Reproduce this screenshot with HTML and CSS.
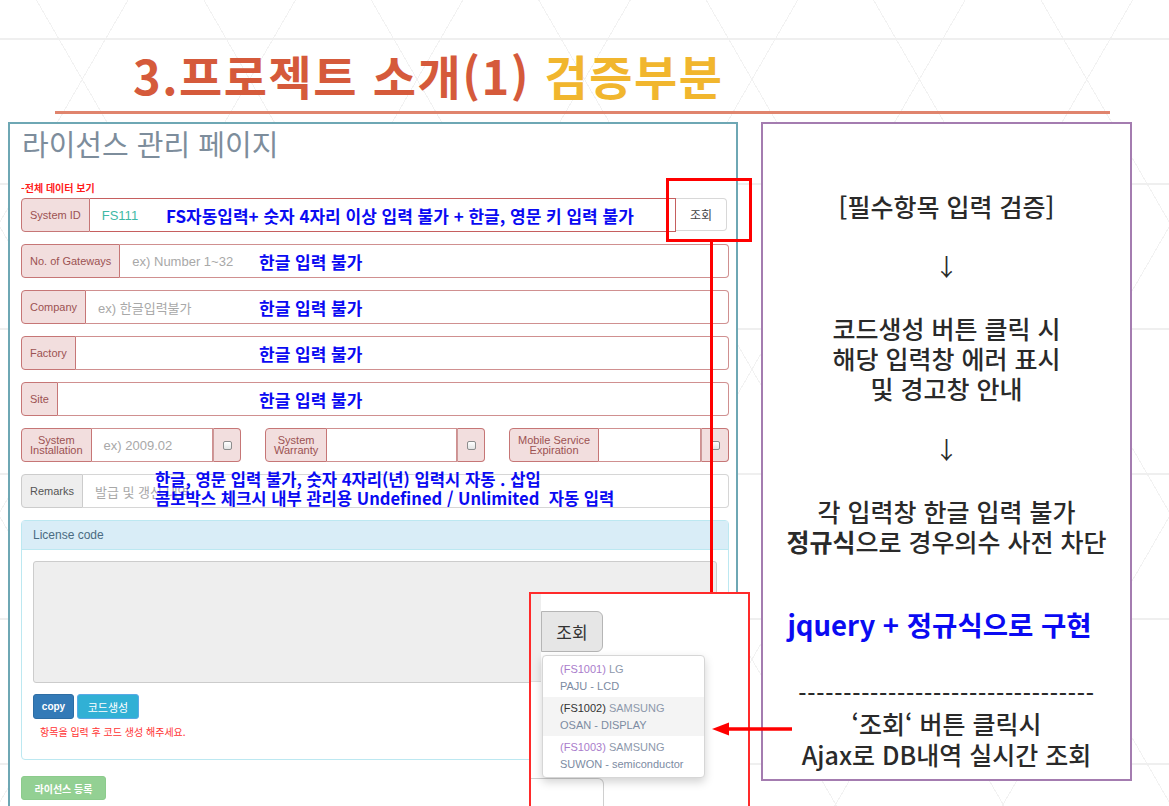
FILE: index.html
```html
<!DOCTYPE html>
<html lang="ko">
<head>
<meta charset="utf-8">
<title>3.프로젝트 소개(1) 검증부분</title>
<link rel="stylesheet" href="styles.css">
</head>
<body>
<div class="slide">
  <h1 class="title"><span class="t-main">3.프로젝트 소개(1)</span> <span class="t-accent">검증부분</span></h1>
  <div class="rule"></div>

  <div class="content">
    <section class="app">
      <h2 class="app-title">라이선스 관리 페이지</h2>
      <div class="all-link">-전체 데이터 보기</div>

      <div class="form">
        <div class="row row-id">
          <div class="group err">
            <span class="addon">System ID</span>
            <span class="field"><span class="val">FS111</span></span>
          </div>
          <button class="btn-lookup" type="button">조회</button>
          <span class="note n1">FS자동입력+ 숫자 4자리 이상 입력 불가 + 한글, 영문 키 입력 불가</span>
        </div>

        <div class="row">
          <div class="group err">
            <span class="addon">No. of Gateways</span>
            <span class="field">ex) Number 1~32</span>
          </div>
          <span class="note n2">한글 입력 불가</span>
        </div>

        <div class="row">
          <div class="group err">
            <span class="addon">Company</span>
            <span class="field">ex) 한글입력불가</span>
          </div>
          <span class="note n2">한글 입력 불가</span>
        </div>

        <div class="row">
          <div class="group err">
            <span class="addon">Factory</span>
            <span class="field"></span>
          </div>
          <span class="note n2">한글 입력 불가</span>
        </div>

        <div class="row">
          <div class="group err">
            <span class="addon">Site</span>
            <span class="field"></span>
          </div>
          <span class="note n2">한글 입력 불가</span>
        </div>

        <div class="row row-3">
          <div class="group err">
            <span class="addon two">System<br>Installation</span>
            <span class="field mid">ex) 2009.02</span>
            <span class="addon-cb"><span class="cb"></span></span>
          </div>
          <div class="group err">
            <span class="addon two">System<br>Warranty</span>
            <span class="field mid"></span>
            <span class="addon-cb"><span class="cb"></span></span>
          </div>
          <div class="group err">
            <span class="addon two">Mobile Service<br>Expiration</span>
            <span class="field mid"></span>
            <span class="addon-cb"><span class="cb"></span></span>
          </div>
        </div>

        <div class="row">
          <div class="group plain">
            <span class="addon">Remarks</span>
            <span class="field">발급 및 갱신 내역</span>
          </div>
          <span class="note n3">한글, 영문 입력 불가, 숫자 4자리(년) 입력시 자동 . 삽입<br>콤보박스 체크시 내부 관리용 Undefined / Unlimited&nbsp; 자동 입력</span>
        </div>
      </div>

      <div class="lic">
        <div class="lic-head">License code</div>
        <div class="lic-body">
          <div class="code-area"></div>
          <div class="btns">
            <button class="btn btn-copy" type="button">copy</button>
            <button class="btn btn-gen" type="button">코드생성</button>
          </div>
          <p class="msg">항목을 입력 후 코드 생성 해주세요.</p>
        </div>
      </div>

      <button class="btn-reg" type="button">라이선스 등록</button>
    </section>

    <aside class="notes">
      <div class="nb">[필수항목 입력 검증]</div>
      <div class="arrow a1">↓</div>
      <div class="nb b2">코드생성 버튼 클릭 시<br>해당 입력창 에러 표시<br>및 경고창 안내</div>
      <div class="arrow a2">↓</div>
      <div class="nb b3">각 입력창 한글 입력 불가<br><strong>정규식</strong>으로 경우의수 사전 차단</div>
      <div class="jq">jquery + 정규식으로 구현</div>
      <div class="dash">---------------------------------</div>
      <div class="nb b4">‘조회‘ 버튼 클릭시<br>Ajax로 DB내역 실시간 조회</div>
    </aside>
  </div>

  <!-- overlays -->
  <div class="hl-box"></div>
  <div class="hl-line"></div>

  <div class="zoom-pop">
    <div class="zp-top">
      <div class="zp-strip"></div>
      <div class="zp-btn">조회</div>
    </div>
    <div class="zp-bottom"></div>
    <ul class="dropdown">
      <li class="dd-item"><span class="id">(FS1001)</span> <span class="nm">LG</span><br><span class="loc">PAJU - LCD</span></li>
      <li class="dd-item active"><span class="id">(FS1002)</span> <span class="nm">SAMSUNG</span><br><span class="loc">OSAN - DISPLAY</span></li>
      <li class="dd-item"><span class="id">(FS1003)</span> <span class="nm">SAMSUNG</span><br><span class="loc">SUWON - semiconductor</span></li>
    </ul>
  </div>

  <svg class="red-arrow" width="80" height="16" viewBox="0 0 80 16" aria-hidden="true">
    <line x1="14" y1="8" x2="80" y2="8" stroke="#f00" stroke-width="3.5"/>
    <polygon points="0,8 17,1.5 17,14.5" fill="#f00"/>
  </svg>
</div>
</body>
</html>
```

FILE: styles.css
```css
* { box-sizing: border-box; }
html, body { margin: 0; padding: 0; }
body {
  width: 1169px;
  height: 806px;
  overflow: hidden;
  background: #fff;
  font-family: "Noto Sans CJK KR", sans-serif;
}

.slide {
  position: relative;
  width: 1169px;
  height: 806px;
  overflow: hidden;
  background-color: #fff;
  background-image:
    repeating-linear-gradient(180deg, transparent 0 38px, #efefef 38px 40px, transparent 40px 145px),
    repeating-linear-gradient(60deg, transparent 0 144px, #f2f2f2 144px 145px),
    repeating-linear-gradient(-60deg, transparent 0 144px, #f2f2f2 144px 145px);
}

/* ---------- title ---------- */
.title {
  margin: 0;
  padding: 52px 0 0 133px;
  font-size: 47px;
  line-height: 46px;
  font-weight: 700;
  letter-spacing: 1.5px;
  white-space: nowrap;
}
.t-main { color: #d55a3b; }
.t-accent { color: #f1b62e; }

.rule {
  margin: 13px 0 0 55px;
  width: 1055px;
  height: 3px;
  background: #e0846d;
}

.content {
  display: flex;
  align-items: flex-start;
  gap: 23px;
  margin-top: 8px;
  padding-left: 8px;
}

/* ---------- left app panel ---------- */
.app {
  width: 730px;
  height: 700px;
  flex: none;
  background: #fff;
  border: 2px solid #6ea7b4;
  border-bottom: 0;
  padding: 0 7px 0 11px;
  font-family: "Liberation Sans", "Noto Sans CJK KR", sans-serif;
}

.app-title {
  margin: 1px 0 0 1px;
  font-family: "Noto Sans CJK KR", sans-serif;
  font-size: 29px;
  line-height: 37px;
  font-weight: 400;
  color: #7d8d9c;
}

.all-link {
  margin-top: 19px;
  font-family: "Noto Sans CJK KR", sans-serif;
  font-size: 10px;
  line-height: 14px;
  font-weight: 700;
  color: #ff1a1a;
}

.form {
  margin-top: 3px;
  display: flex;
  flex-direction: column;
  gap: 12px;
}

.row {
  position: relative;
  display: flex;
  height: 34px;
}

.group {
  display: flex;
  flex: 1;
  min-width: 0;
}

.addon {
  display: flex;
  align-items: center;
  justify-content: center;
  padding: 0 8px;
  font-size: 11px;
  line-height: 11px;
  text-align: center;
  border: 1px solid;
  border-radius: 4px 0 0 4px;
  white-space: nowrap;
}
.addon.two { line-height: 10px; }

.field {
  flex: 1;
  min-width: 0;
  display: flex;
  align-items: center;
  padding-left: 12px;
  font-size: 13px;
  color: #a8a8a8;
  background: #fff;
  border: 1px solid;
  border-left: 0;
  border-radius: 0 4px 4px 0;
  white-space: nowrap;
  overflow: hidden;
}

.err .addon { background: #f2dede; border-color: #c67676; color: #9c5252; }
.err .field { border-color: #d09090; }
.plain .addon { background: #eee; border-color: #ccc; color: #555; }
.plain .field { border-color: #d6d6d6; }

.val { color: #3fb9a6; }

.row-id .field { border-radius: 0; border-color: #c65f5f; }
.btn-lookup {
  width: 51px;
  height: 33px;
  margin: 0 2px 0 0;
  padding: 0;
  background: #fff;
  border: 1px solid #d8d8d8;
  border-left: 0;
  border-radius: 0 4px 4px 0;
  font-family: "Noto Sans CJK KR", sans-serif;
  font-size: 12px;
  color: #444;
}

.row-3 {
  display: grid;
  grid-template-columns: repeat(3, 220px);
  column-gap: 24px;
}
.field.mid { border-radius: 0; }
.addon-cb {
  width: 28px;
  display: flex;
  align-items: center;
  justify-content: center;
  background: #f2dede;
  border: 1px solid #c67676;
  border-left-color: #c99;
  border-radius: 0 4px 4px 0;
}
.cb {
  width: 9px;
  height: 9px;
  border: 1px solid #8d8d8d;
  border-radius: 2px;
  background: linear-gradient(#fff, #e4e4e4);
}

/* annotations laid over the form */
.note {
  position: absolute;
  top: 0;
  bottom: 0;
  display: flex;
  align-items: center;
  font-family: "Noto Sans CJK KR", sans-serif;
  font-size: 17px;
  line-height: 19px;
  font-weight: 700;
  color: #0a0af2;
  white-space: nowrap;
}
.n1 { left: 145px; }
.n2 { left: 238px; }
.n3 { left: 134px; top: -4px; font-size: 16.6px; }

/* license panel */
.lic {
  margin-top: 12px;
  height: 240px;
  border: 1px solid #bce8f1;
  border-radius: 4px;
  background: #fff;
}
.lic-head {
  height: 29px;
  display: flex;
  align-items: center;
  padding-left: 11px;
  background: #d9edf7;
  border-bottom: 1px solid #bce8f1;
  font-size: 12px;
  color: #4a6b82;
}
.lic-body { padding: 11px; }
.code-area {
  height: 122px;
  background: #eee;
  border: 1px solid #ccc;
  border-radius: 3px;
}
.btns {
  display: flex;
  gap: 3px;
  margin-top: 11px;
}
.btn {
  height: 25px;
  padding: 0;
  border: 1px solid;
  border-radius: 3px;
  color: #fff;
  font-family: "Liberation Sans", "Noto Sans CJK KR", sans-serif;
  font-size: 10px;
  font-weight: 700;
}
.btn-copy { width: 41px; background: #337ab7; border-color: #2e6da4; }
.btn-gen { width: 62px; background: #31b0d5; border-color: #5aa9e6; font-weight: 400; font-size: 11px; }
.msg {
  margin: 6px 0 0 7px;
  font-family: "Noto Sans CJK KR", sans-serif;
  font-size: 10px;
  line-height: 14px;
  color: #ff3333;
}

.btn-reg {
  display: block;
  margin-top: 16px;
  width: 85px;
  height: 24px;
  padding: 0;
  background: #93d093;
  border: 1px solid #8ccb8c;
  border-radius: 3px;
  color: #fff;
  font-family: "Noto Sans CJK KR", sans-serif;
  font-size: 10px;
  font-weight: 700;
}

/* ---------- right notes panel ---------- */
.notes {
  width: 371px;
  height: 659px;
  flex: none;
  background: #fff;
  border: 2px solid #a47cb0;
  padding-top: 67px;
  display: flex;
  flex-direction: column;
  align-items: center;
  text-align: center;
  color: #2a2a2a;
  font-size: 25px;
  font-weight: 500;
  line-height: 30px;
}
.nb { white-space: nowrap; }
.nb strong { font-weight: 700; }
.arrow { font-size: 24px; line-height: 30px; font-weight: 400; }
.a1 { margin-top: 30px; }
.b2 { margin-top: 32px; }
.a2 { margin-top: 31px; }
.b3 { margin-top: 32px; }
.jq {
  margin: 51px 14px 0 0;
  font-size: 27.5px;
  line-height: 34px;
  font-weight: 700;
  color: #0a0af2;
  white-space: nowrap;
}
.dash {
  margin-top: 37px;
  font-size: 23px;
  letter-spacing: 0.75px;
  white-space: nowrap;
}
.b4 { line-height: 31px; }

/* ---------- overlays ---------- */
.hl-box {
  position: absolute;
  left: 666px;
  top: 178px;
  width: 86px;
  height: 64px;
  border: 3.5px solid #ff0000;
}
.hl-line {
  position: absolute;
  left: 710px;
  top: 241px;
  width: 3px;
  height: 352px;
  background: #ff0000;
}

.zoom-pop {
  position: absolute;
  left: 529px;
  top: 592px;
  width: 221px;
  height: 230px;
  background: #fff;
  border: 2px solid #ff2a2a;
}
.zp-top {
  display: flex;
  align-items: flex-start;
  height: 88px;
}
.zp-strip {
  width: 10px;
  height: 88px;
  background: #eee;
  border-bottom: 1px solid #dcdcdc;
}
.zp-btn {
  margin-top: 17px;
  width: 62px;
  height: 41px;
  display: flex;
  align-items: center;
  justify-content: center;
  background: #e6e6e6;
  border: 1px solid #b5b5b5;
  border-radius: 0 6px 6px 0;
  font-size: 17px;
  color: #333;
}
.zp-bottom {
  margin-top: 96px;
  width: 73px;
  height: 60px;
  border: 1px solid #cfcfcf;
  border-left: 0;
  border-radius: 0 6px 0 0;
}

.dropdown {
  position: absolute;
  left: 11px;
  top: 61px;
  width: 163px;
  margin: 0;
  padding: 2px 0;
  list-style: none;
  background: #fff;
  border: 1px solid #d6d6d6;
  border-radius: 4px;
  box-shadow: 0 4px 10px rgba(0, 0, 0, 0.18);
  font-family: "Liberation Sans", sans-serif;
  font-size: 11px;
  line-height: 17px;
}
.dd-item {
  height: 39px;
  padding: 3px 0 0 17px;
  white-space: nowrap;
}
.dd-item.active { background: #f4f4f4; }
.id { color: #a97ccb; }
.active .id { color: #333; }
.nm { color: #8d98ab; }
.loc { color: #7c8ba2; }

.red-arrow {
  position: absolute;
  left: 712px;
  top: 721px;
}
```
